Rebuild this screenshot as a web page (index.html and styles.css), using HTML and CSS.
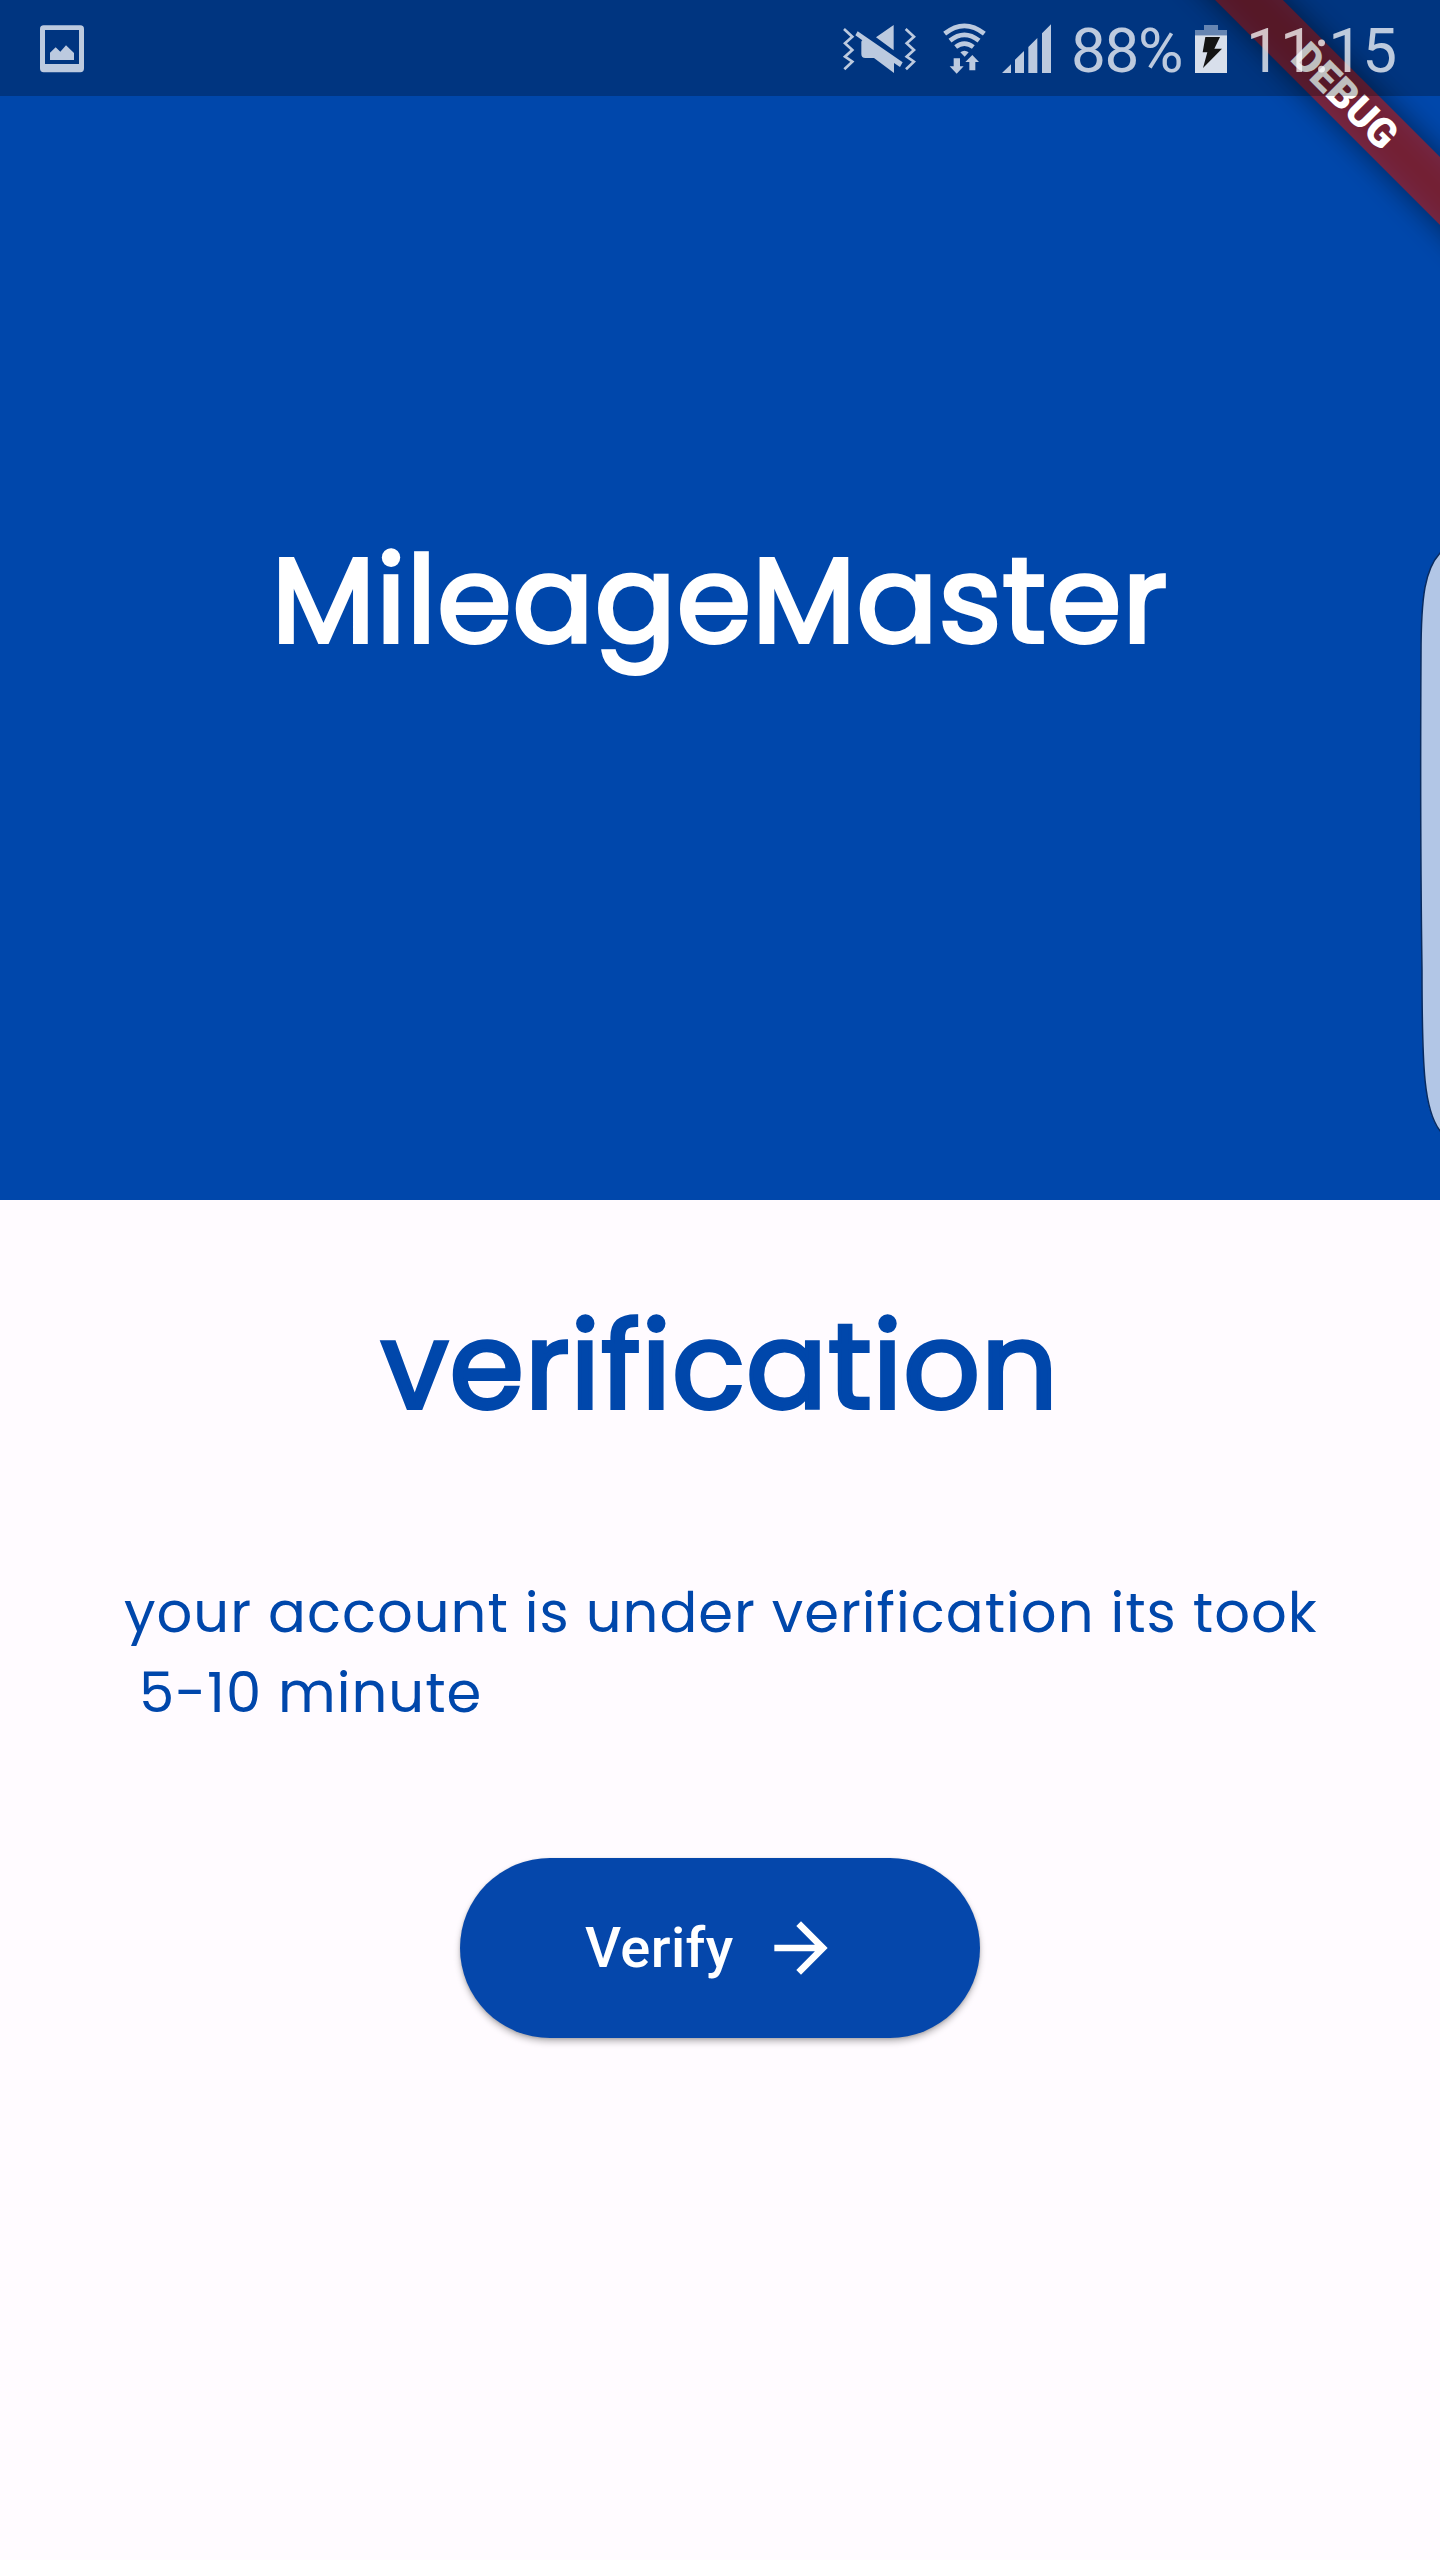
FILE: index.html
```html
<!DOCTYPE html>
<html lang="en">
<head>
<meta charset="utf-8">
<title>MileageMaster</title>
<link rel="stylesheet" href="styles.css">
</head>
<body>
<div class="screen">
  <header class="hero">
    <h1 class="brand">MileageMaster</h1>
  </header>
  <main class="content">
    <h2 class="heading">verification</h2>
    <p class="message">your account is under verification its took<br><span class="second-line">5-10 minute</span></p>
    <button class="verify" type="button">
      <span class="verify-label">Verify</span>
      <svg class="arrow" viewBox="0 0 24 24"><path d="M12 4l-1.41 1.41L16.17 11H4v2h12.17l-5.58 5.59L12 20l8-8z"/></svg>
    </button>
  </main>

  <div class="debug-corner">
    <div class="ribbon-shadow"></div>
    <div class="ribbon">DEBUG</div>
  </div>

  <div class="status-bar">
    <svg class="icon picture" viewBox="120 0 132 288">
      <path fill-rule="evenodd" d="M131 76h110q11 0 11 11v118q0 12-11 12H131q-11 0-11-12V87q0-11 11-11zM135 90v102h102V90z"/>
      <path d="M150 180v-22l17-16 14 13 17-19 24 23v21z"/>
    </svg>
    <svg class="icon sound" viewBox="66 0 222 288">
      <path class="line" d="M72 87l25 23-22 20 22 20-22 20 22 15-24 23M257 87l25 23-22 20 22 20-22 20 22 15-24 23"/>
      <path d="M221 75v76l-53-39zM113 94l135 93-8 14-18-12v30l-60-45h-26q-12 0-12-12v-36q0-3 3-5l-21-15z"/>
    </svg>
    <svg class="icon wifi" viewBox="369 0 132 288">
      <path class="wave" d="M374 101q59-47 119 0M390 122q43-35 87 0M407 141q26-20 53 0"/>
      <path d="M421 157q12-10 25 0l-12 13zM401 175h19v24h11l-21 22-21-22h12zM448 211v-25h-12l21-21 20 21h-11v25z"/>
    </svg>
    <svg class="icon signal" viewBox="546 0 150 288">
      <path d="M546 219l27-26v26zM585 219v-40l27-26v66zM625 219v-78l27-27v105zM666 219V100l27-27v146z"/>
    </svg>
    <span class="percent">88%</span>
    <svg class="icon battery" viewBox="465 0 96 288">
      <path class="cap" d="M492 75h42v15h27v16h-96V90h27z"/>
      <path class="cell" d="M465 106h96v113h-96z"/>
      <path class="bolt" d="M496 111h44l-17 35h23l-57 58 13-47h-14z"/>
    </svg>
    <span class="time">11:15</span>
  </div>

  <svg class="edge-handle" viewBox="0 0 24 620">
    <path d="M25 22C9 38 5 66 5 125Q4 300 6 440C6 540 8 582 25 602" />
  </svg>
</div>
</body>
</html>
```
FILE: styles.css
```css
* { box-sizing: border-box; }

body { margin: 0; }

.screen {
  position: relative;
  display: flex;
  flex-direction: column;
  width: 1440px;
  height: 2560px;
  overflow: hidden;
  background: #fffbff;
  color: #0047ab;
  font-family: Poppins, Inter, sans-serif;
  font-feature-settings: "cv11";
}

.hero {
  display: flex;
  justify-content: center;
  height: 1200px;
  padding-top: 510px;
  background: #0047ab;
  color: #fff;
}

.brand, .heading {
  margin: 0;
  font-size: 120px;
  line-height: 180px;
  font-weight: 400;
  letter-spacing: 1px;
  white-space: nowrap;
  -webkit-text-stroke: 3.75px currentColor;
}

.content {
  display: flex;
  flex-direction: column;
  align-items: center;
  padding-top: 76px;
}

.message {
  align-self: stretch;
  margin: 117px 0 0 124px;
  font-size: 56px;
  line-height: 80px;
  letter-spacing: 1px;
  white-space: nowrap;
}

.second-line { margin-left: 15px; }

.verify {
  display: flex;
  align-items: center;
  width: 520px;
  height: 180px;
  margin-top: 125px;
  padding: 0 0 0 125px;
  gap: 27px;
  border: 0;
  border-radius: 90px;
  background: #0547ab;
  color: #fff;
  box-shadow: 0 4px 6px rgba(0, 0, 0, .25), 0 1px 3px rgba(0, 0, 0, .15);
}

.verify-label {
  font: 500 56px/82px Roboto, sans-serif;
  letter-spacing: .4px;
}

.arrow { width: 80px; height: 80px; fill: #fff; }

.debug-corner {
  position: absolute;
  top: 0;
  right: 0;
  width: 480px;
  height: 480px;
  overflow: hidden;
}

.ribbon, .ribbon-shadow {
  position: absolute;
  left: 85px;
  top: 72px;
  width: 600px;
  height: 48px;
  transform: rotate(45deg);
}

.ribbon-shadow { background: rgba(0, 0, 0, .5); filter: blur(15px); }

.ribbon {
  background: rgba(183, 28, 28, .627);
  color: #fff;
  font: 900 40.8px/48px Roboto, sans-serif;
  text-align: center;
}

.status-bar {
  position: absolute;
  inset: 0 0 auto;
  display: flex;
  height: 96px;
  padding-left: 40px;
  background: rgba(0, 0, 0, .25);
  color: rgba(255, 255, 255, .74);
  font: 400 62px/102px Roboto, sans-serif;
}

.icon { flex: none; height: 96px; fill: #bccadf; }
.picture { width: 44px; }
.sound { width: 74px; margin-left: 758px; }
.wifi { width: 44px; margin-left: 27px; }
.signal { width: 50px; margin-left: 15px; }
.battery { width: 32px; }
.line { fill: none; stroke: #bccadf; stroke-width: 8; }
.wave { fill: none; stroke: #bccadf; stroke-width: 14; }
.cap { fill: #6685b2; }
.cell { fill: #d8dfeb; }
.bolt { fill: #141414; }
.percent { width: 124px; margin-left: 19px; letter-spacing: -1.4px; }
.time { margin-left: 19px; letter-spacing: -.8px; }

.edge-handle {
  position: absolute;
  top: 530px;
  right: 0;
  width: 24px;
  height: 620px;
  fill: #b2c6e6;
  stroke: #082b60;
  stroke-width: 1.5;
}
```
